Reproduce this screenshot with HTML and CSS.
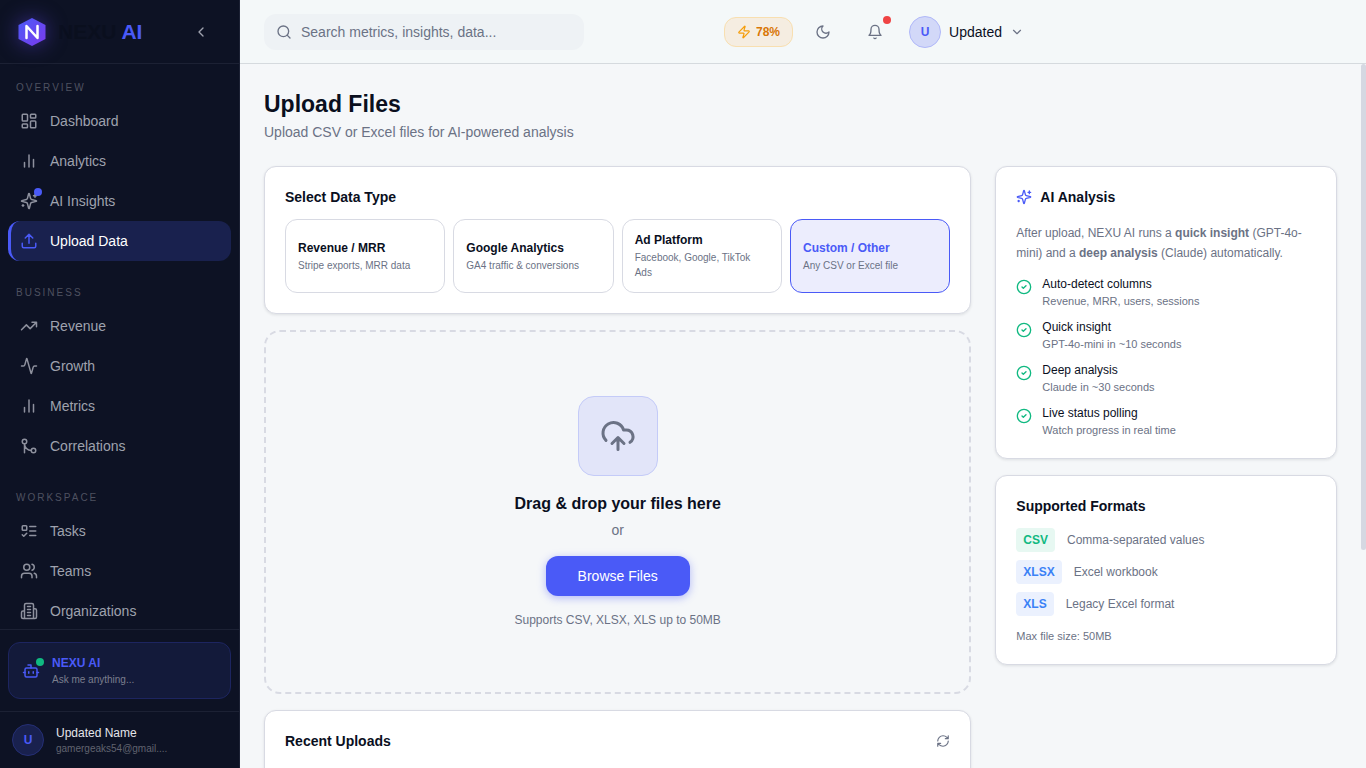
FILE: index.html
```html
<!DOCTYPE html>
<html lang="en">
<head>
    <meta charset="UTF-8">
    <meta name="viewport" content="width=device-width, initial-scale=1.0">
    <title>NEXU AI - Upload Files</title>
    <link rel="stylesheet" href="styles.css">
</head>
<body>
    <aside class="sidebar">
        <div class="brand">
            <svg class="brand-logo" viewBox="0 0 32 32">
                <defs>
                    <linearGradient id="hex" x1="0" y1="0" x2="1" y2="1">
                        <stop offset="0" stop-color="#4a5af7"/>
                        <stop offset="1" stop-color="#7c3aed"/>
                    </linearGradient>
                </defs>
                <path d="M16 2 29.500 9v14L16 30 2.500 23V9z" fill="url(#hex)"/>
                <path d="M10.500 22V10l11 12V10" fill="none" stroke="#fff" stroke-width="2.500" stroke-linecap="round" stroke-linejoin="round"/>
            </svg>
            <span class="brand-name">NEXU <span>AI</span></span>
            <button class="collapse" aria-label="Collapse sidebar">
                <svg class="icon" viewBox="0 0 24 24"><path d="m15 18-6-6 6-6"/></svg>
            </button>
        </div>

        <nav class="nav">
            <div class="nav-section">
                <h2 class="nav-label">OVERVIEW</h2>
                <a class="nav-item" href="#"><svg class="icon" viewBox="0 0 24 24"><rect x="3" y="3" width="7" height="9" rx="1"/><rect x="14" y="3" width="7" height="5" rx="1"/><rect x="14" y="12" width="7" height="9" rx="1"/><rect x="3" y="16" width="7" height="5" rx="1"/></svg>Dashboard</a>
                <a class="nav-item" href="#"><svg class="icon" viewBox="0 0 24 24"><path d="M18 20V10M12 20V4M6 20v-6"/></svg>Analytics</a>
                <a class="nav-item" href="#"><span class="icon-wrap"><svg class="icon" viewBox="0 0 24 24"><path d="M9.937 15.500A2 2 0 0 0 8.500 14.063l-6.135-1.582a.5.5 0 0 1 0-.962L8.500 9.936A2 2 0 0 0 9.937 8.500l1.582-6.135a.5.5 0 0 1 .963 0L14.063 8.500A2 2 0 0 0 15.500 9.937l6.135 1.581a.5.5 0 0 1 0 .964L15.500 14.063a2 2 0 0 0-1.437 1.437l-1.582 6.135a.5.5 0 0 1-.963 0zM20 3v4M22 5h-4M4 17v2M5 18H3"/></svg><i class="dot dot-blue"></i></span>AI Insights</a>
                <a class="nav-item active" href="#"><svg class="icon" viewBox="0 0 24 24"><path d="M21 15v4a2 2 0 0 1-2 2H5a2 2 0 0 1-2-2v-4M17 8l-5-5-5 5M12 3v12"/></svg>Upload Data</a>
            </div>
            <div class="nav-section">
                <h2 class="nav-label">BUSINESS</h2>
                <a class="nav-item" href="#"><svg class="icon" viewBox="0 0 24 24"><path d="m22 7-8.500 8.500-5-5L2 17M16 7h6v6"/></svg>Revenue</a>
                <a class="nav-item" href="#"><svg class="icon" viewBox="0 0 24 24"><path d="M22 12h-2.480a2 2 0 0 0-1.930 1.460l-2.350 8.360a.25.25 0 0 1-.48 0L9.240 2.180a.25.25 0 0 0-.48 0l-2.350 8.360A2 2 0 0 1 4.490 12H2"/></svg>Growth</a>
                <a class="nav-item" href="#"><svg class="icon" viewBox="0 0 24 24"><path d="M18 20V10M12 20V4M6 20v-6"/></svg>Metrics</a>
                <a class="nav-item" href="#"><svg class="icon" viewBox="0 0 24 24"><circle cx="18" cy="18" r="3"/><circle cx="6" cy="6" r="3"/><path d="M6 21V9a9 9 0 0 0 9 9"/></svg>Correlations</a>
            </div>
            <div class="nav-section">
                <h2 class="nav-label">WORKSPACE</h2>
                <a class="nav-item" href="#"><svg class="icon" viewBox="0 0 24 24"><rect x="3" y="5" width="6" height="6" rx="1"/><path d="m3 17 2 2 4-4M13 6h8M13 12h8M13 18h8"/></svg>Tasks</a>
                <a class="nav-item" href="#"><svg class="icon" viewBox="0 0 24 24"><path d="M16 21v-2a4 4 0 0 0-4-4H6a4 4 0 0 0-4 4v2M22 21v-2a4 4 0 0 0-3-3.870M16 3.130a4 4 0 0 1 0 7.750"/><circle cx="9" cy="7" r="4"/></svg>Teams</a>
                <a class="nav-item" href="#"><svg class="icon" viewBox="0 0 24 24"><path d="M6 22V4a2 2 0 0 1 2-2h8a2 2 0 0 1 2 2v18ZM6 12H4a2 2 0 0 0-2 2v6a2 2 0 0 0 2 2h2M18 9h2a2 2 0 0 1 2 2v9a2 2 0 0 1-2 2h-2M10 6h4M10 10h4M10 14h4M10 18h4"/></svg>Organizations</a>
            </div>
        </nav>

        <div class="assistant">
            <button class="assistant-btn">
                <span class="icon-wrap"><svg class="icon" viewBox="0 0 24 24"><path d="M12 8V4H8M2 14h2M20 14h2M15 13v2M9 13v2"/><rect x="4" y="8" width="16" height="12" rx="2"/></svg><i class="dot dot-green"></i></span>
                <span>
                    <strong>NEXU AI</strong>
                    <small>Ask me anything...</small>
                </span>
            </button>
        </div>

        <div class="profile">
            <span class="avatar">U</span>
            <div class="profile-text">
                <p class="profile-name">Updated Name</p>
                <p class="profile-mail">gamergeaks54@gmail....</p>
            </div>
        </div>
    </aside>

    <div class="page">
        <header class="topbar">
            <label class="search">
                <svg class="icon" viewBox="0 0 24 24"><circle cx="11" cy="11" r="8"/><path d="m21 21-4.300-4.300"/></svg>
                <input type="text" placeholder="Search metrics, insights, data..." aria-label="Search">
            </label>
            <div class="tools">
                <button class="credits"><svg class="icon" viewBox="0 0 24 24"><path d="M4 14a1 1 0 0 1-.78-1.630l9.900-10.200a.5.5 0 0 1 .86.460l-1.920 6.020A1 1 0 0 0 13 10h7a1 1 0 0 1 .78 1.630l-9.900 10.200a.5.5 0 0 1-.86-.460l1.920-6.020A1 1 0 0 0 11 14z"/></svg>78%</button>
                <button class="tool" aria-label="Dark mode"><svg class="icon" viewBox="0 0 24 24"><path d="M12 3a6 6 0 0 0 9 9 9 9 0 1 1-9-9Z"/></svg></button>
                <button class="tool" aria-label="Notifications"><svg class="icon" viewBox="0 0 24 24"><path d="M6 8a6 6 0 0 1 12 0c0 7 3 9 3 9H3s3-2 3-9M10.300 21a1.940 1.940 0 0 0 3.400 0"/></svg><i class="dot dot-red"></i></button>
                <button class="user">
                    <span class="avatar avatar-light">U</span>
                    Updated
                    <svg class="icon" viewBox="0 0 24 24"><path d="m6 9 6 6 6-6"/></svg>
                </button>
            </div>
        </header>

        <div class="scroll-area">
            <main class="content">
                <h1>Upload Files</h1>
                <p class="subtitle">Upload CSV or Excel files for AI-powered analysis</p>

                <div class="columns">
                    <div class="stack">
                        <section class="card">
                            <h3>Select Data Type</h3>
                            <div class="types">
                                <button class="type"><strong>Revenue / MRR</strong><small>Stripe exports, MRR data</small></button>
                                <button class="type"><strong>Google Analytics</strong><small>GA4 traffic &amp; conversions</small></button>
                                <button class="type"><strong>Ad Platform</strong><small>Facebook, Google, TikTok Ads</small></button>
                                <button class="type selected"><strong>Custom / Other</strong><small>Any CSV or Excel file</small></button>
                            </div>
                        </section>

                        <section class="dropzone">
                            <div class="drop-icon"><svg class="icon" viewBox="0 0 24 24"><path d="M12 13v8M4 14.899A7 7 0 1 1 15.710 8h1.790a4.500 4.500 0 0 1 2.500 8.242M8 17l4-4 4 4"/></svg></div>
                            <h3>Drag &amp; drop your files here</h3>
                            <p class="or">or</p>
                            <button class="browse">Browse Files</button>
                            <p class="hint">Supports CSV, XLSX, XLS up to 50MB</p>
                        </section>

                        <section class="card recent">
                            <div class="recent-head">
                                <h3>Recent Uploads</h3>
                                <button class="refresh" aria-label="Refresh"><svg class="icon" viewBox="0 0 24 24"><path d="M3 12a9 9 0 0 1 9-9 9.750 9.750 0 0 1 6.740 2.740L21 8M21 3v5h-5M21 12a9 9 0 0 1-9 9 9.750 9.750 0 0 1-6.740-2.740L3 16M8 16H3v5"/></svg></button>
                            </div>
                        </section>
                    </div>

                    <div class="stack">
                        <section class="card">
                            <h3 class="ai-title"><svg class="icon" viewBox="0 0 24 24"><path d="M9.937 15.500A2 2 0 0 0 8.500 14.063l-6.135-1.582a.5.5 0 0 1 0-.962L8.500 9.936A2 2 0 0 0 9.937 8.500l1.582-6.135a.5.5 0 0 1 .963 0L14.063 8.500A2 2 0 0 0 15.500 9.937l6.135 1.581a.5.5 0 0 1 0 .964L15.500 14.063a2 2 0 0 0-1.437 1.437l-1.582 6.135a.5.5 0 0 1-.963 0zM20 3v4M22 5h-4M4 17v2M5 18H3"/></svg>AI Analysis</h3>
                            <p class="ai-text">After upload, NEXU AI runs a <strong>quick insight</strong> (GPT-4o-mini) and a <strong>deep analysis</strong> (Claude) automatically.</p>
                            <ul class="steps">
                                <li><svg class="icon" viewBox="0 0 24 24"><circle cx="12" cy="12" r="10"/><path d="m9 12 2 2 4-4"/></svg><div><p>Auto-detect columns</p><small>Revenue, MRR, users, sessions</small></div></li>
                                <li><svg class="icon" viewBox="0 0 24 24"><circle cx="12" cy="12" r="10"/><path d="m9 12 2 2 4-4"/></svg><div><p>Quick insight</p><small>GPT-4o-mini in ~10 seconds</small></div></li>
                                <li><svg class="icon" viewBox="0 0 24 24"><circle cx="12" cy="12" r="10"/><path d="m9 12 2 2 4-4"/></svg><div><p>Deep analysis</p><small>Claude in ~30 seconds</small></div></li>
                                <li><svg class="icon" viewBox="0 0 24 24"><circle cx="12" cy="12" r="10"/><path d="m9 12 2 2 4-4"/></svg><div><p>Live status polling</p><small>Watch progress in real time</small></div></li>
                            </ul>
                        </section>

                        <section class="card">
                            <h3>Supported Formats</h3>
                            <ul class="formats">
                                <li><span class="chip chip-green">CSV</span>Comma-separated values</li>
                                <li><span class="chip">XLSX</span>Excel workbook</li>
                                <li><span class="chip">XLS</span>Legacy Excel format</li>
                            </ul>
                            <p class="max-size">Max file size: 50MB</p>
                        </section>
                    </div>
                </div>
            </main>
            <div class="scroll-track"><div class="scroll-thumb"></div></div>
        </div>
    </div>
</body>
</html>
```
FILE: styles.css
```css
* {
    margin: 0;
    padding: 0;
    box-sizing: border-box;
}

body {
    display: flex;
    height: 100vh;
    overflow: hidden;
    font-family: "Liberation Sans", Arial, sans-serif;
    font-size: 14px;
    line-height: 20px;
    color: #0a0f1e;
    background: #f5f7f9;
}

button,
input {
    font: inherit;
    color: inherit;
    border: none;
    background: none;
}

button {
    cursor: pointer;
}

a {
    color: inherit;
    text-decoration: none;
}

ul {
    list-style: none;
}

small,
strong {
    display: block;
}

.icon {
    width: 16px;
    height: 16px;
    flex: none;
    display: block;
    fill: none;
    stroke: currentColor;
    stroke-width: 2;
    stroke-linecap: round;
    stroke-linejoin: round;
}

.icon-wrap {
    position: relative;
    flex: none;
}

.dot {
    position: absolute;
    top: -4px;
    right: -4px;
    width: 8px;
    height: 8px;
    border-radius: 50%;
}

.dot-blue {
    background: #4a5af7;
}

.dot-green {
    background: #10b981;
}

.dot-red {
    background: #ef4444;
}

/* sidebar */

.sidebar {
    display: flex;
    flex-direction: column;
    flex: none;
    width: 240px;
    background: #0d1224;
    border-right: 1px solid #1c2134;
    color: #9fa2ae;
}

.brand {
    display: flex;
    align-items: center;
    flex: none;
    height: 64px;
    padding: 0 28px 0 16px;
    border-bottom: 1px solid #1c2134;
}

.brand-logo {
    width: 32px;
    height: 32px;
    margin-right: 10px;
    filter: drop-shadow(0 0 10px rgba(100, 70, 240, 0.5));
}

.brand-name {
    flex: 1;
    font-size: 21px;
    font-weight: 700;
    color: #0a0f1e;
}

.brand-name span {
    color: #4a5af7;
}

.collapse {
    padding: 2px;
}

.nav {
    flex: 1;
    overflow: hidden;
    padding: 12px 8px;
}

.nav-section {
    margin-bottom: 20px;
}

.nav-label {
    padding: 4px 8px 6px;
    font-size: 10px;
    font-weight: 400;
    line-height: 15px;
    letter-spacing: 2px;
    color: #4d5160;
}

.nav-item {
    display: flex;
    align-items: center;
    gap: 12px;
    height: 40px;
    padding: 0 12px;
    border-radius: 12px;
}

.nav-item .icon {
    width: 18px;
    height: 18px;
    color: #8e919e;
}

.nav-item.active {
    padding-left: 9px;
    border-left: 3px solid #4a5af7;
    background: #19214e;
    color: #fff;
}

.nav-item.active .icon {
    color: #4a5af7;
}

.assistant {
    padding: 12px 8px;
    border-top: 1px solid #1c2134;
}

.assistant-btn {
    display: flex;
    align-items: center;
    gap: 12px;
    width: 100%;
    padding: 11px 13px;
    border: 1px solid #1d2560;
    border-radius: 12px;
    background: #131a3a;
    text-align: left;
}

.assistant-btn .icon {
    width: 18px;
    height: 18px;
    color: #4a5af7;
}

.assistant-btn strong {
    font-size: 12px;
    line-height: 18px;
    color: #4a5af7;
}

.assistant-btn small {
    font-size: 10px;
    line-height: 15px;
    color: #7b7f8e;
}

.profile {
    display: flex;
    align-items: center;
    gap: 12px;
    padding: 12px;
    border-top: 1px solid #1c2134;
}

.avatar {
    display: flex;
    align-items: center;
    justify-content: center;
    flex: none;
    width: 32px;
    height: 32px;
    border: 1px solid #252f75;
    border-radius: 50%;
    background: #19214e;
    font-size: 12px;
    font-weight: 700;
    color: #4a5af7;
}

.avatar-light {
    border-color: #b0b8f8;
    background: #d2d8f8;
}

.profile-name {
    font-size: 12px;
    line-height: 16px;
    color: #e4e5ea;
}

.profile-mail {
    font-size: 10px;
    line-height: 15px;
    color: #60636f;
}

/* top bar */

.page {
    display: flex;
    flex-direction: column;
    flex: 1;
    min-width: 0;
}

.topbar {
    display: flex;
    align-items: center;
    flex: none;
    gap: 140px;
    height: 64px;
    padding: 0 24px;
    border-bottom: 1px solid #d5dade;
    background: #f4f8f9;
}

.search {
    display: flex;
    align-items: center;
    gap: 9px;
    width: 320px;
    height: 36px;
    padding: 0 12px;
    border-radius: 12px;
    background: #eef2f5;
    color: #6b7285;
}

.search input {
    flex: 1;
    min-width: 0;
    outline: none;
}

.search input::placeholder {
    color: #6b7285;
}

.tools {
    display: flex;
    align-items: center;
    gap: 8px;
    color: #6b7285;
}

.credits {
    display: flex;
    align-items: center;
    gap: 5px;
    height: 30px;
    padding: 0 12px;
    border: 1px solid #f8dfb0;
    border-radius: 12px;
    background: #f5ede1;
    font-size: 12px;
    font-weight: 700;
    color: #d97706;
}

.credits .icon {
    width: 14px;
    height: 14px;
    color: #f59e0b;
}

.tool {
    position: relative;
    padding: 10px 14px;
}

.tool .dot {
    top: 2px;
    right: 6px;
}

.user {
    display: flex;
    align-items: center;
    gap: 8px;
    padding-left: 4px;
    color: #0a0f1e;
}

.user .icon {
    width: 14px;
    height: 14px;
    color: #6b7285;
}

/* content */

.scroll-area {
    display: flex;
    flex: 1;
    min-height: 0;
}

.content {
    flex: 1;
    overflow-y: auto;
    padding: 24px;
    scrollbar-width: none;
}

.scroll-track {
    width: 5px;
}

.scroll-thumb {
    height: 69%;
    border-radius: 3px;
    background: #d5d8e2;
}

h1 {
    font-size: 23px;
    font-weight: 600;
    line-height: 32px;
}

h3 {
    font-size: 14px;
    font-weight: 600;
}

.subtitle {
    margin: 2px 0 24px;
    color: #6b7285;
}

.columns {
    display: grid;
    grid-template-columns: repeat(3, 1fr);
    align-items: start;
    gap: 24px;
}

.stack {
    display: flex;
    flex-direction: column;
    gap: 16px;
}

.stack:first-child {
    grid-column: span 2;
}

.card {
    padding: 20px;
    border: 1px solid #d8dae3;
    border-radius: 12px;
    background: #fff;
    box-shadow: 0 1px 3px rgba(10, 15, 30, 0.1);
}

.types {
    display: grid;
    grid-template-columns: repeat(4, 1fr);
    gap: 8px;
    margin-top: 12px;
}

.type {
    padding: 12px 16px 12px 12px;
    border: 1px solid #d8dae3;
    border-radius: 12px;
    text-align: left;
}

.type strong {
    margin-bottom: 2px;
    font-size: 12px;
    font-weight: 600;
    line-height: 16px;
}

.type small {
    font-size: 10px;
    line-height: 15px;
    color: #6b7285;
}

.type.selected {
    border-color: #4a5af7;
    background: #ecedfd;
}

.type.selected strong {
    color: #4a5af7;
}

.dropzone {
    display: flex;
    flex-direction: column;
    align-items: center;
    padding: 64px;
    border: 2px dashed #d8dae3;
    border-radius: 16px;
    color: #6b7285;
}

.drop-icon {
    display: flex;
    align-items: center;
    justify-content: center;
    width: 80px;
    height: 80px;
    margin-bottom: 16px;
    border: 1px solid #c4cbf8;
    border-radius: 16px;
    background: #e2e5f9;
}

.drop-icon .icon {
    width: 36px;
    height: 36px;
}

.dropzone h3 {
    font-size: 16px;
    line-height: 24px;
    color: #0a0f1e;
}

.or {
    margin: 4px 0 16px;
}

.browse {
    height: 40px;
    padding: 0 32px;
    border-radius: 12px;
    background: #4a5af7;
    box-shadow: 0 2px 8px rgba(74, 90, 247, 0.4);
    color: #fff;
}

.hint {
    margin-top: 16px;
    font-size: 12px;
    line-height: 16px;
}

.recent {
    min-height: 350px;
}

.recent-head {
    display: flex;
    align-items: center;
    justify-content: space-between;
}

.refresh {
    color: #6b7285;
}

.refresh .icon {
    width: 14px;
    height: 14px;
}

.ai-title {
    display: flex;
    align-items: center;
    gap: 8px;
}

.ai-title .icon {
    color: #4a5af7;
}

.ai-text {
    margin: 16px 0 12px;
    font-size: 12px;
    color: #6b7285;
}

.ai-text strong {
    display: inline;
}

.steps {
    display: grid;
    gap: 9px;
}

.steps li {
    display: flex;
    gap: 10px;
}

.steps .icon {
    margin-top: 4px;
    color: #10b981;
}

.steps p {
    font-size: 12px;
    line-height: 18px;
}

.steps small,
.max-size {
    font-size: 11px;
    line-height: 16px;
    color: #6b7285;
}

.formats {
    display: grid;
    gap: 8px;
    margin: 12px 0;
}

.formats li {
    display: flex;
    align-items: center;
    gap: 12px;
    font-size: 12px;
    color: #6b7285;
}

.chip {
    padding: 4px 7px;
    border-radius: 4px;
    background: #ebf1fe;
    font-weight: 700;
    line-height: 16px;
    color: #3b82f6;
}

.chip-green {
    background: #e7f8f2;
    color: #10b981;
}
```
